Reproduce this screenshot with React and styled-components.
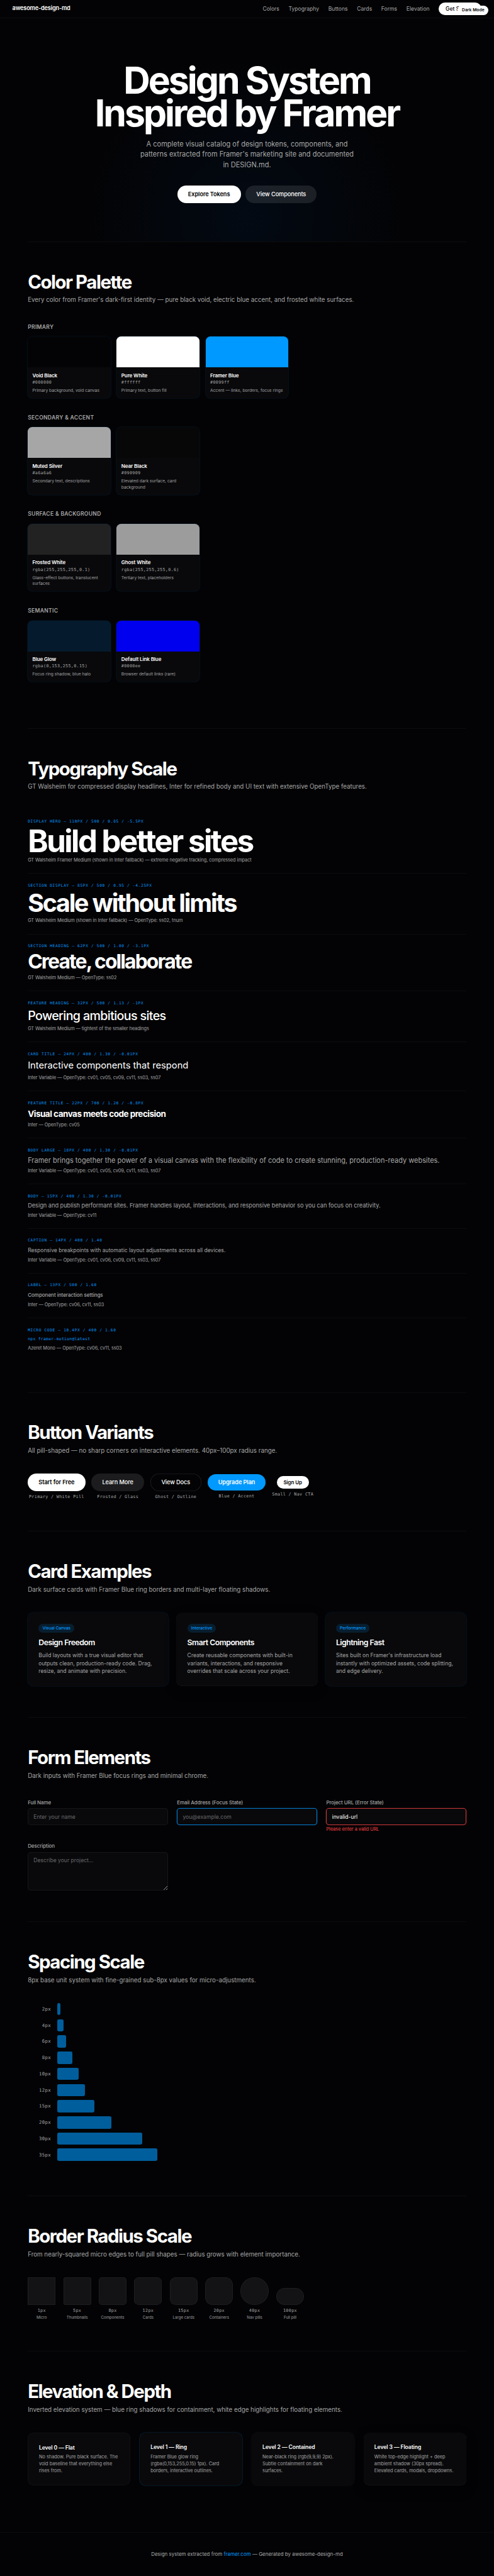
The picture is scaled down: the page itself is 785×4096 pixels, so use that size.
import React from "react"
import styled, { createGlobalStyle, ThemeProvider } from "styled-components"

const theme = {
  colors: {
    bg: "#030305",
    surface: "#09090b",
    text: "#ffffff",
    muted: "#a6a6a6",
    blue: "#0099ff",
    glow: "rgba(0, 153, 255, 0.15)",
    line: "rgba(255, 255, 255, 0.038)",
    error: "#ff4444",
  },
  mono: '"DejaVu Sans Mono", monospace',
}

const GlobalStyle = createGlobalStyle`
  * {
    box-sizing: border-box;
  }

  body {
    margin: 0;
    background: ${theme.colors.bg};
  }
`

// the catalog is authored at 1280px wide and scaled down as a whole
const Page = styled.div`
  position: relative;
  width: 1280px;
  zoom: 0.61328;
  overflow: hidden;
  color: ${props => props.theme.colors.text};
  background: ${props => props.theme.colors.bg};
  font-family: Inter, "Liberation Sans", sans-serif;
  font-size: 14px;
  line-height: 1.4;
`

const Nav = styled.nav`
  display: flex;
  align-items: center;
  justify-content: space-between;
  height: 47px;
  padding: 0 32px;
  border-bottom: 1px solid ${props => props.theme.colors.line};
`

const Logo = styled.span`
  font-size: 15px;
  font-weight: 600;
  letter-spacing: -0.3px;
`

const NavLinks = styled.div`
  display: flex;
  align-items: center;
  gap: 24px;
`

const NavLink = styled.a`
  color: ${props => props.theme.colors.muted};
  font-size: 14px;
`

const NavCta = styled.button`
  width: 111px;
  height: 33px;
  padding: 0;
  border: 0;
  border-radius: 40px;
  background: #fff;
  color: #000;
  font: 500 14px/17px Inter, sans-serif;
`

const ModeToggle = styled.button`
  position: absolute;
  top: 14px;
  right: 14px;
  width: 80px;
  height: 25px;
  padding: 0;
  border: 0;
  border-radius: 20px;
  background: #fff;
  color: #000;
  font: 600 11px/13px Inter, sans-serif;
`

const Hero = styled.header`
  display: flex;
  flex-direction: column;
  align-items: center;
  height: 579px;
  padding-top: 120px;
  text-align: center;
  background: radial-gradient(
    circle 420px at 50% 515px,
    rgba(0, 120, 255, 0.06),
    rgba(0, 120, 255, 0)
  );
`

const HeroTitle = styled.h1`
  margin: 0 0 24px;
  font-size: 96px;
  font-weight: 700;
  line-height: 84.5px;
  letter-spacing: -4.8px;
`

const HeroText = styled.p`
  width: 560px;
  margin: 0 0 40px;
  color: ${props => props.theme.colors.muted};
  font-size: 18px;
  line-height: 27px;
`

const HeroActions = styled.div`
  display: flex;
  gap: 12px;
`

const variants = {
  white: "background: #fff; color: #000; font-weight: 600;",
  frosted: "background: rgba(255, 255, 255, 0.1); color: #fff;",
  ghost:
    "background: transparent; color: #fff; box-shadow: inset 0 0 0 1px rgba(255, 255, 255, 0.15);",
  blue: "background: #0099ff; color: #fff; height: 43px; font-weight: 600;",
  small:
    "background: #fff; color: #000; height: 34px; font-size: 13px; font-weight: 600;",
}

const Pill = styled.button`
  width: ${props => props.$width}px;
  height: 45px;
  padding: 0;
  border: 0;
  border-radius: 100px;
  font-family: inherit;
  font-size: 15px;
  font-weight: 500;
  letter-spacing: -0.15px;
  ${props => variants[props.$variant]}
`

const Section = styled.section`
  margin: 0 72px;
  padding: 79.4px 0 80px;
  border-top: 1px solid ${props => props.theme.colors.line};
`

const SectionTitle = styled.h2`
  margin: 0 0 12px;
  font-size: 48px;
  font-weight: 700;
  line-height: 48px;
  letter-spacing: -2.4px;
`

const SectionText = styled.p`
  margin: 0 0 48px;
  color: ${props => props.theme.colors.muted};
  font-size: 16px;
  line-height: 22.4px;
`

const GroupLabel = styled.h3`
  margin: 0 0 16px;
  color: ${props => props.theme.colors.muted};
  font-size: 14px;
  font-weight: 600;
  line-height: 19.6px;
  letter-spacing: 0.5px;
  text-transform: uppercase;
`

const SwatchGrid = styled.div`
  display: grid;
  grid-template-columns: repeat(5, 1fr);
  gap: 16px;
  margin-bottom: 40px;
`

const Swatch = styled.div`
  overflow: hidden;
  border-radius: 12px;
  background: ${props => props.theme.colors.surface};
  box-shadow: 0 0 0 1px ${props => props.theme.colors.glow};
`

const SwatchColor = styled.div`
  height: 80px;
  background: ${props => props.$color};
`

const SwatchInfo = styled.div`
  padding: 12px;
`

const SwatchName = styled.div`
  margin-bottom: 2px;
  font-size: 13px;
  font-weight: 600;
  line-height: 18.2px;
  letter-spacing: -0.13px;
`

const SwatchHex = styled.div`
  margin-bottom: 4px;
  color: ${props => props.theme.colors.muted};
  font-family: ${props => props.theme.mono};
  font-size: 11px;
  line-height: 15.4px;
  letter-spacing: 0.53px;
`

const SwatchNote = styled.div`
  color: rgba(255, 255, 255, 0.6);
  font-size: 11px;
  line-height: 15.8px;
`

const TypeRow = styled.div`
  padding: 24px 0 24.2px;
  border-bottom: 1px solid ${props => props.theme.colors.line};
  margin-bottom: -0.63px;

  &:last-child {
    border-bottom: 0;
    margin-bottom: 0;
  }
`

const TypeLabel = styled.div`
  margin-bottom: 8px;
  color: ${props => props.theme.colors.blue};
  font-family: ${props => props.theme.mono};
  font-size: 10px;
  line-height: 14px;
  letter-spacing: 1.14px;
  text-transform: uppercase;
`

const TypeSample = styled.div`
  margin-bottom: 8px;
  color: ${props => props.$color || "#fff"};
  font-family: ${props => (props.$mono ? props.theme.mono : "inherit")};
  font-size: ${props => props.$size}px;
  font-weight: ${props => props.$weight};
  line-height: ${props => props.$leading};
  letter-spacing: ${props => props.$tracking}px;
  white-space: nowrap;
`

const TypeNote = styled.div`
  color: ${props => props.theme.colors.muted};
  font-size: 12px;
  line-height: 16.8px;
  letter-spacing: -0.11px;
`

const ButtonRow = styled.div`
  display: flex;
  align-items: center;
  gap: 16px;
`

const ButtonItem = styled.div`
  display: flex;
  flex-direction: column;
  align-items: center;
  gap: 8px;
`

const MonoLabel = styled.span`
  color: ${props => props.theme.colors.muted};
  font-family: ${props => props.theme.mono};
  font-size: 11px;
  line-height: 15.4px;
  letter-spacing: 0.54px;
`

const CardGrid = styled.div`
  display: grid;
  grid-template-columns: repeat(3, 1fr);
  gap: 20px;
`

const floating =
  "inset 0 -0.5px 0 rgba(255, 255, 255, 0.14), 0 10px 30px rgba(0, 0, 0, 0.25)"

const Card = styled.div`
  height: 191.6px;
  padding: 29.6px 28px 0;
  border-radius: 15px;
  background: ${props => props.theme.colors.surface};
  box-shadow: ${props =>
    props.$floating ? floating : `0 0 0 1px ${props.theme.colors.glow}`};
`

const Tag = styled.div`
  width: fit-content;
  margin-bottom: 13.2px;
  padding: 0 10px;
  border-radius: 40px;
  background: ${props => props.theme.colors.glow};
  color: ${props => props.theme.colors.blue};
  font-size: 11px;
  font-weight: 500;
  line-height: 23px;
  letter-spacing: -0.11px;
`

const CardTitle = styled.h3`
  margin: 0 0 9.2px;
  font-size: 20px;
  font-weight: 600;
  line-height: 26px;
  letter-spacing: -0.8px;
`

const CardText = styled.p`
  margin: 0;
  color: ${props => props.theme.colors.muted};
  font-size: 14px;
  line-height: 21px;
`

const FormGrid = styled.form`
  display: grid;
  grid-template-columns: repeat(3, 1fr);
  gap: 24px;
`

const Field = styled.div`
  display: flex;
  flex-direction: column;
`

const FieldLabel = styled.label`
  margin-bottom: 4.5px;
  color: ${props => props.theme.colors.muted};
  font-size: 13px;
  font-weight: 500;
  line-height: 20.8px;
  letter-spacing: -0.13px;
`

const inputRings = {
  focus: "inset 0 0 0 1.4px #0099ff, 0 0 0 1px rgba(0, 153, 255, 0.2)",
  error: "inset 0 0 0 1.4px #ff4444, 0 0 0 1px rgba(255, 68, 68, 0.15)",
}

const Input = styled.input`
  height: 43px;
  padding: 0 15px;
  border: 0;
  border-radius: 8px;
  outline: 0;
  background: ${props => props.theme.colors.surface};
  box-shadow: ${props =>
    inputRings[props.$state] || "inset 0 0 0 1px rgba(255, 255, 255, 0.1)"};
  color: #fff;
  font: 14px Inter, sans-serif;

  &::placeholder {
    color: #67676a;
  }
`

const TextArea = styled(Input)`
  height: 100px;
  padding: 13px 15px;
  line-height: 17px;
  resize: vertical;
`

const FieldError = styled.span`
  margin-top: 4.3px;
  color: ${props => props.theme.colors.error};
  font-size: 12px;
  line-height: 16.8px;
`

const SpacingRow = styled.div`
  display: flex;
  align-items: center;
  gap: 16px;
  margin-bottom: 10px;
`

const SpacingLabel = styled(MonoLabel)`
  width: 60px;
  font-size: 12px;
  letter-spacing: 0.5px;
  text-align: right;
`

const SpacingBar = styled.div`
  height: 32px;
  border-radius: 4px;
  background: #005e9c;
`

const RadiusRow = styled.div`
  display: flex;
  align-items: flex-end;
  gap: 20px;
`

const RadiusItem = styled.div`
  display: flex;
  flex-direction: column;
  align-items: center;
  width: 72px;
`

const RadiusBox = styled.div`
  width: 72px;
  height: ${props => props.$height || 72}px;
  margin-bottom: 8px;
  border-radius: ${props => props.$radius}px;
  background: #131315;
  box-shadow: inset 0 0 0 1px rgba(255, 255, 255, 0.08);
`

const RadiusNote = styled.span`
  margin-top: 2px;
  color: rgba(255, 255, 255, 0.6);
  font-size: 10px;
  line-height: 14px;
`

const LevelGrid = styled.div`
  display: grid;
  grid-template-columns: repeat(4, 1fr);
  gap: 24px;
`

const levelShadows = {
  flat: "inset 0 0 0 1px rgba(255, 255, 255, 0.06)",
  ring: "0 0 0 1px rgba(0, 153, 255, 0.25)",
  contained: "0 0 0 2px #09090b",
  floating,
}

const Level = styled.div`
  height: 137.6px;
  padding: ${props => (props.$kind === "flat" ? 29 : 28)}px;
  padding-right: 0;
  border-radius: 15px;
  background: ${props => props.theme.colors.surface};
  box-shadow: ${props => levelShadows[props.$kind]};
`

const LevelTitle = styled.h4`
  margin: 0 0 6px;
  font-size: 14px;
  font-weight: 600;
  line-height: 19.6px;
  letter-spacing: -0.14px;
`

const LevelText = styled.p`
  margin: 0;
  color: ${props => props.theme.colors.muted};
  font-size: 12px;
  line-height: 18px;
  white-space: pre-line;
`

const Footer = styled.footer`
  height: 116px;
  margin-top: 40px;
  padding-top: 47.4px;
  border-top: 1px solid ${props => props.theme.colors.line};
  color: ${props => props.theme.colors.muted};
  font-size: 13px;
  line-height: 18.2px;
  text-align: center;

  a {
    color: ${props => props.theme.colors.blue};
  }
`

const palette = [
  {
    label: "Primary",
    swatches: [
      ["Void Black", "#000000", "Primary background, void canvas", "#030305"],
      ["Pure White", "#ffffff", "Primary text, button fill"],
      ["Framer Blue", "#0099ff", "Accent — links, borders, focus rings"],
    ],
  },
  {
    label: "Secondary & Accent",
    swatches: [
      ["Muted Silver", "#a6a6a6", "Secondary text, descriptions"],
      ["Near Black", "#090909", "Elevated dark surface, card background", "#070708"],
    ],
  },
  {
    label: "Surface & Background",
    swatches: [
      ["Frosted White", "rgba(255,255,255,0.1)", "Glass-effect buttons, translucent surfaces"],
      ["Ghost White", "rgba(255,255,255,0.6)", "Tertiary text, placeholders"],
    ],
  },
  {
    label: "Semantic",
    swatches: [
      ["Blue Glow", "rgba(0,153,255,0.15)", "Focus ring shadow, blue halo", "#051b2d"],
      ["Default Link Blue", "#0000ee", "Browser default links (rare)"],
    ],
  },
]

const muted = theme.colors.muted
const allFeatures = "Inter Variable — OpenType: cv01, cv05, cv09, cv11, ss03, ss07"

const typeScale = [
  {
    label: "Display Hero — 110px / 500 / 0.85 / -5.5px",
    text: "Build better sites",
    note: "GT Walsheim Framer Medium (shown in Inter fallback) — extreme negative tracking, compressed impact",
    size: 80, weight: 700, leading: 0.871, tracking: -4,
  },
  {
    label: "Section Display — 85px / 500 / 0.95 / -4.25px",
    text: "Scale without limits",
    note: "GT Walsheim Medium (shown in Inter fallback) — OpenType: ss02, tnum",
    size: 64, weight: 700, leading: 0.95, tracking: -3.5,
  },
  {
    label: "Section Heading — 62px / 500 / 1.00 / -3.1px",
    text: "Create, collaborate",
    note: "GT Walsheim Medium — OpenType: ss02",
    size: 52, weight: 700, leading: 1, tracking: -3.1,
  },
  {
    label: "Feature Heading — 32px / 500 / 1.13 / -1px",
    text: "Powering ambitious sites",
    note: "GT Walsheim Medium — tightest of the smaller headings",
    size: 32, weight: 500, leading: 1.13, tracking: -1,
  },
  {
    label: "Card Title — 24px / 400 / 1.30 / -0.01px",
    text: "Interactive components that respond",
    note: allFeatures,
    size: 24, weight: 400, leading: 1.3, tracking: -0.01,
  },
  {
    label: "Feature Title — 22px / 700 / 1.20 / -0.8px",
    text: "Visual canvas meets code precision",
    note: "Inter — OpenType: cv05",
    size: 22, weight: 700, leading: 1.2, tracking: -0.8,
  },
  {
    label: "Body Large — 18px / 400 / 1.30 / -0.01px",
    text: "Framer brings together the power of a visual canvas with the flexibility of code to create stunning, production-ready websites.",
    note: allFeatures,
    size: 18, weight: 400, leading: 1.3, tracking: -0.01, color: muted,
  },
  {
    label: "Body — 15px / 400 / 1.30 / -0.01px",
    text: "Design and publish performant sites. Framer handles layout, interactions, and responsive behavior so you can focus on creativity.",
    note: "Inter Variable — OpenType: cv11",
    size: 15, weight: 400, leading: 1.3, tracking: -0.01, color: muted,
  },
  {
    label: "Caption — 14px / 400 / 1.40",
    text: "Responsive breakpoints with automatic layout adjustments across all devices.",
    note: "Inter Variable — OpenType: cv01, cv06, cv09, cv11, ss03, ss07",
    size: 14, weight: 400, leading: 1.4, tracking: 0, color: muted,
  },
  {
    label: "Label — 13px / 500 / 1.60",
    text: "Component interaction settings",
    note: "Inter — OpenType: cv06, cv11, ss03",
    size: 13, weight: 500, leading: 1.6, tracking: 0, color: muted,
  },
  {
    label: "Micro Code — 10.4px / 400 / 1.60",
    text: "npx framer-motion@latest",
    note: "Azeret Mono — OpenType: cv06, cv11, ss03",
    size: 10.4, weight: 400, leading: 1.6, tracking: 0.5, color: theme.colors.blue, mono: true,
  },
]

const buttons = [
  ["Start for Free", "Primary / White Pill", "white", 149],
  ["Learn More", "Frosted / Glass", "frosted", 136.5],
  ["View Docs", "Ghost / Outline", "ghost", 132],
  ["Upgrade Plan", "Blue / Accent", "blue", 151.5],
  ["Sign Up", "Small / Nav CTA", "small", 83.5],
]

const cards = [
  ["Visual Canvas", "Design Freedom", "Build layouts with a true visual editor that outputs clean, production-ready code. Drag, resize, and animate with precision."],
  ["Interactive", "Smart Components", "Create reusable components with built-in variants, interactions, and responsive overrides that scale across your project."],
  ["Performance", "Lightning Fast", "Sites built on Framer's infrastructure load instantly with optimized assets, code splitting, and edge delivery."],
]

const spacing = [
  [2, 8],
  [4, 16],
  [6, 24],
  [8, 40],
  [10, 56],
  [12, 72],
  [15, 96],
  [20, 140],
  [30, 220],
  [35, 260],
]

const radii = [
  [1, "Micro"],
  [5, "Thumbnails"],
  [8, "Components"],
  [12, "Cards"],
  [15, "Large cards"],
  [20, "Containers"],
  [40, "Nav pills"],
  [100, "Full pill", 44],
]

const levels = [
  ["flat", "Level 0 — Flat", "No shadow. Pure black surface. The\nvoid baseline that everything else\nrises from."],
  ["ring", "Level 1 — Ring", "Framer Blue glow ring\n(rgba(0,153,255,0.15) 1px). Card\nborders, interactive outlines."],
  ["contained", "Level 2 — Contained", "Near-black ring (rgb(9,9,9) 2px).\nSubtle containment on dark\nsurfaces."],
  ["floating", "Level 3 — Floating", "White top-edge highlight + deep\nambient shadow (30px spread).\nElevated cards, modals, dropdowns."],
]

const SectionHead = ({ title, children }) => (
  <>
    <SectionTitle>{title}</SectionTitle>
    <SectionText>{children}</SectionText>
  </>
)

export default () => (
  <ThemeProvider theme={theme}>
    <GlobalStyle />
    <Page>
      <Nav>
        <Logo>awesome-design-md</Logo>
        <NavLinks>
          {["Colors", "Typography", "Buttons", "Cards", "Forms", "Elevation"].map(link => (
            <NavLink key={link}>{link}</NavLink>
          ))}
          <NavCta>Get Started</NavCta>
        </NavLinks>
      </Nav>
      <ModeToggle>Dark Mode</ModeToggle>

      <Hero>
        <HeroTitle>
          Design System
          <br />
          Inspired by Framer
        </HeroTitle>
        <HeroText>
          A complete visual catalog of design tokens, components, and patterns
          extracted from Framer's marketing site and documented in DESIGN.md.
        </HeroText>
        <HeroActions>
          <Pill $variant="white" $width={165}>Explore Tokens</Pill>
          <Pill $variant="frosted" $width={185}>View Components</Pill>
        </HeroActions>
      </Hero>

      <Section>
        <SectionHead title="Color Palette">
          Every color from Framer's dark-first identity — pure black void,
          electric blue accent, and frosted white surfaces.
        </SectionHead>
        {palette.map(group => (
          <React.Fragment key={group.label}>
            <GroupLabel>{group.label}</GroupLabel>
            <SwatchGrid>
              {group.swatches.map(([name, value, note, fill]) => (
                <Swatch key={name}>
                  <SwatchColor $color={fill || value} />
                  <SwatchInfo>
                    <SwatchName>{name}</SwatchName>
                    <SwatchHex>{value}</SwatchHex>
                    <SwatchNote>{note}</SwatchNote>
                  </SwatchInfo>
                </Swatch>
              ))}
            </SwatchGrid>
          </React.Fragment>
        ))}
      </Section>

      <Section>
        <SectionHead title="Typography Scale">
          GT Walsheim for compressed display headlines, Inter for refined body
          and UI text with extensive OpenType features.
        </SectionHead>
        <div>
          {typeScale.map(item => (
            <TypeRow key={item.label}>
              <TypeLabel>{item.label}</TypeLabel>
              <TypeSample
                $size={item.size}
                $weight={item.weight}
                $leading={item.leading}
                $tracking={item.tracking}
                $color={item.color}
                $mono={item.mono}
              >
                {item.text}
              </TypeSample>
              <TypeNote>{item.note}</TypeNote>
            </TypeRow>
          ))}
        </div>
      </Section>

      <Section>
        <SectionHead title="Button Variants">
          All pill-shaped — no sharp corners on interactive elements.
          40px–100px radius range.
        </SectionHead>
        <ButtonRow>
          {buttons.map(([text, label, variant, width]) => (
            <ButtonItem key={text}>
              <Pill $variant={variant} $width={width}>{text}</Pill>
              <MonoLabel>{label}</MonoLabel>
            </ButtonItem>
          ))}
        </ButtonRow>
      </Section>

      <Section>
        <SectionHead title="Card Examples">
          Dark surface cards with Framer Blue ring borders and multi-layer
          floating shadows.
        </SectionHead>
        <CardGrid>
          {cards.map(([tag, title, text], i) => (
            <Card key={title} $floating={i === 1}>
              <Tag>{tag}</Tag>
              <CardTitle>{title}</CardTitle>
              <CardText>{text}</CardText>
            </Card>
          ))}
        </CardGrid>
      </Section>

      <Section>
        <SectionHead title="Form Elements">
          Dark inputs with Framer Blue focus rings and minimal chrome.
        </SectionHead>
        <FormGrid>
          <Field>
            <FieldLabel>Full Name</FieldLabel>
            <Input placeholder="Enter your name" />
          </Field>
          <Field>
            <FieldLabel>Email Address (Focus State)</FieldLabel>
            <Input $state="focus" placeholder="you@example.com" />
          </Field>
          <Field>
            <FieldLabel>Project URL (Error State)</FieldLabel>
            <Input $state="error" defaultValue="invalid-url" />
            <FieldError>Please enter a valid URL</FieldError>
          </Field>
          <Field>
            <FieldLabel>Description</FieldLabel>
            <TextArea as="textarea" placeholder="Describe your project..." />
          </Field>
        </FormGrid>
      </Section>

      <Section>
        <SectionHead title="Spacing Scale">
          8px base unit system with fine-grained sub-8px values for
          micro-adjustments.
        </SectionHead>
        {spacing.map(([value, width]) => (
          <SpacingRow key={value}>
            <SpacingLabel>{value}px</SpacingLabel>
            <SpacingBar style={{ width }} />
          </SpacingRow>
        ))}
      </Section>

      <Section>
        <SectionHead title="Border Radius Scale">
          From nearly-squared micro edges to full pill shapes — radius grows
          with element importance.
        </SectionHead>
        <RadiusRow>
          {radii.map(([radius, note, height]) => (
            <RadiusItem key={radius}>
              <RadiusBox $radius={radius} $height={height} />
              <MonoLabel>{radius}px</MonoLabel>
              <RadiusNote>{note}</RadiusNote>
            </RadiusItem>
          ))}
        </RadiusRow>
      </Section>

      <Section>
        <SectionHead title="Elevation & Depth">
          Inverted elevation system — blue ring shadows for containment, white
          edge highlights for floating elements.
        </SectionHead>
        <LevelGrid>
          {levels.map(([kind, title, text]) => (
            <Level key={kind} $kind={kind}>
              <LevelTitle>{title}</LevelTitle>
              <LevelText>{text}</LevelText>
            </Level>
          ))}
        </LevelGrid>
      </Section>

      <Footer>
        Design system extracted from <a>framer.com</a> — Generated by
        awesome-design-md
      </Footer>
    </Page>
  </ThemeProvider>
)
